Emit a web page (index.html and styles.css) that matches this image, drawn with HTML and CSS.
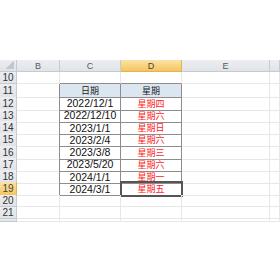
FILE: index.html
```html
<!DOCTYPE html>
<html lang="zh">
<head>
    <meta charset="UTF-8" />
    <title>日期 星期</title>
    <link rel="stylesheet" href="styles.css">
</head>
<body>
    <div class="sheet">
        <div class="row head">
            <div class="corner"></div>
            <div class="col">B</div>
            <div class="col">C</div>
            <div class="col active">D</div>
            <div class="col">E</div>
            <div class="col"></div>
        </div>
        <div class="row">
            <div class="num">10</div>
            <div class="cell"></div>
            <div class="cell above"></div>
            <div class="cell above"></div>
            <div class="cell"></div>
            <div class="cell"></div>
        </div>
        <div class="row">
            <div class="num">11</div>
            <div class="cell before"></div>
            <div class="cell box title">日期</div>
            <div class="cell box title">星期</div>
            <div class="cell"></div>
            <div class="cell"></div>
        </div>
        <div class="row">
            <div class="num">12</div>
            <div class="cell before"></div>
            <div class="cell box date">2022/12/1</div>
            <div class="cell box day">星期四</div>
            <div class="cell"></div>
            <div class="cell"></div>
        </div>
        <div class="row">
            <div class="num">13</div>
            <div class="cell before"></div>
            <div class="cell box date">2022/12/10</div>
            <div class="cell box day">星期六</div>
            <div class="cell"></div>
            <div class="cell"></div>
        </div>
        <div class="row">
            <div class="num">14</div>
            <div class="cell before"></div>
            <div class="cell box date">2023/1/1</div>
            <div class="cell box day">星期日</div>
            <div class="cell"></div>
            <div class="cell"></div>
        </div>
        <div class="row">
            <div class="num">15</div>
            <div class="cell before"></div>
            <div class="cell box date">2023/2/4</div>
            <div class="cell box day">星期六</div>
            <div class="cell"></div>
            <div class="cell"></div>
        </div>
        <div class="row">
            <div class="num">16</div>
            <div class="cell before"></div>
            <div class="cell box date">2023/3/8</div>
            <div class="cell box day">星期三</div>
            <div class="cell"></div>
            <div class="cell"></div>
        </div>
        <div class="row">
            <div class="num">17</div>
            <div class="cell before"></div>
            <div class="cell box date">2023/5/20</div>
            <div class="cell box day">星期六</div>
            <div class="cell"></div>
            <div class="cell"></div>
        </div>
        <div class="row">
            <div class="num">18</div>
            <div class="cell before"></div>
            <div class="cell box date">2024/1/1</div>
            <div class="cell box day">星期一</div>
            <div class="cell"></div>
            <div class="cell"></div>
        </div>
        <div class="row">
            <div class="num active">19</div>
            <div class="cell before"></div>
            <div class="cell box date">2024/3/1</div>
            <div class="cell box day selected">星期五</div>
            <div class="cell"></div>
            <div class="cell"></div>
        </div>
        <div class="row">
            <div class="num">20</div>
            <div class="cell"></div>
            <div class="cell"></div>
            <div class="cell"></div>
            <div class="cell"></div>
            <div class="cell"></div>
        </div>
        <div class="row">
            <div class="num">21</div>
            <div class="cell"></div>
            <div class="cell"></div>
            <div class="cell"></div>
            <div class="cell"></div>
            <div class="cell"></div>
        </div>
        <!-- row 22 only peeks in at the bottom edge -->
        <div class="row cut">
            <div class="num"></div>
            <div class="cell"></div>
            <div class="cell"></div>
            <div class="cell"></div>
            <div class="cell"></div>
            <div class="cell"></div>
        </div>
    </div>
</body>
</html>
```

FILE: styles.css
```css
body {
    margin: 0;
    background: #ffffff;
    font-family: 'Liberation Sans', Arial, sans-serif;
}

.sheet {
    margin-top: 60px;
    width: 280px;
    overflow: hidden;
}

.row {
    display: grid;
    grid-template-columns: 17px 43px 61px 61px 88px 10px;
    height: 12.25px;
}

.row.head {
    height: 12px;
}

.row.cut {
    height: 2.5px;
    overflow: hidden;
}

.corner,
.col,
.num {
    box-sizing: border-box;
    background: linear-gradient(#eceef1, #e0e3e8);
    border-right: 1px solid #c6cbd2;
    border-bottom: 1px solid #c6cbd2;
    color: #555a61;
    font-size: 9px;
    display: flex;
    align-items: center;
    justify-content: center;
}

.corner {
    position: relative;
}

.corner::after {
    content: "";
    position: absolute;
    right: 2px;
    bottom: 2px;
    width: 8px;
    height: 8px;
    background: linear-gradient(135deg, transparent 50%, #c2c7ce 50%);
}

.num {
    font-size: 10px;
    color: #333333;
}

.col.active,
.num.active {
    background: linear-gradient(#fbe3a6, #f4c55f);
    border-color: #e0b452;
    color: #444444;
}

.cell {
    box-sizing: border-box;
    border-right: 1px solid #e7e7e7;
    border-bottom: 1px solid #e7e7e7;
    display: flex;
    align-items: center;
    justify-content: center;
    font-size: 10px;
    color: #000000;
}

.cell.before {
    border-right-color: #8d8d8d;
}

.cell.above {
    border-bottom-color: #8d8d8d;
}

.cell.box {
    border-right-color: #8d8d8d;
    border-bottom-color: #8d8d8d;
}

.date {
    font-size: 10.5px;
    color: #111111;
}

.title {
    background: #dce6f1;
    font-family: 'Noto Sans CJK SC', sans-serif;
    font-size: 9px;
    color: #222222;
}

.day {
    font-family: 'Noto Sans CJK SC', sans-serif;
    font-size: 9px;
    color: #ff1a1a;
}

.selected {
    outline: 2px solid #555555;
    outline-offset: -1px;
}
```
